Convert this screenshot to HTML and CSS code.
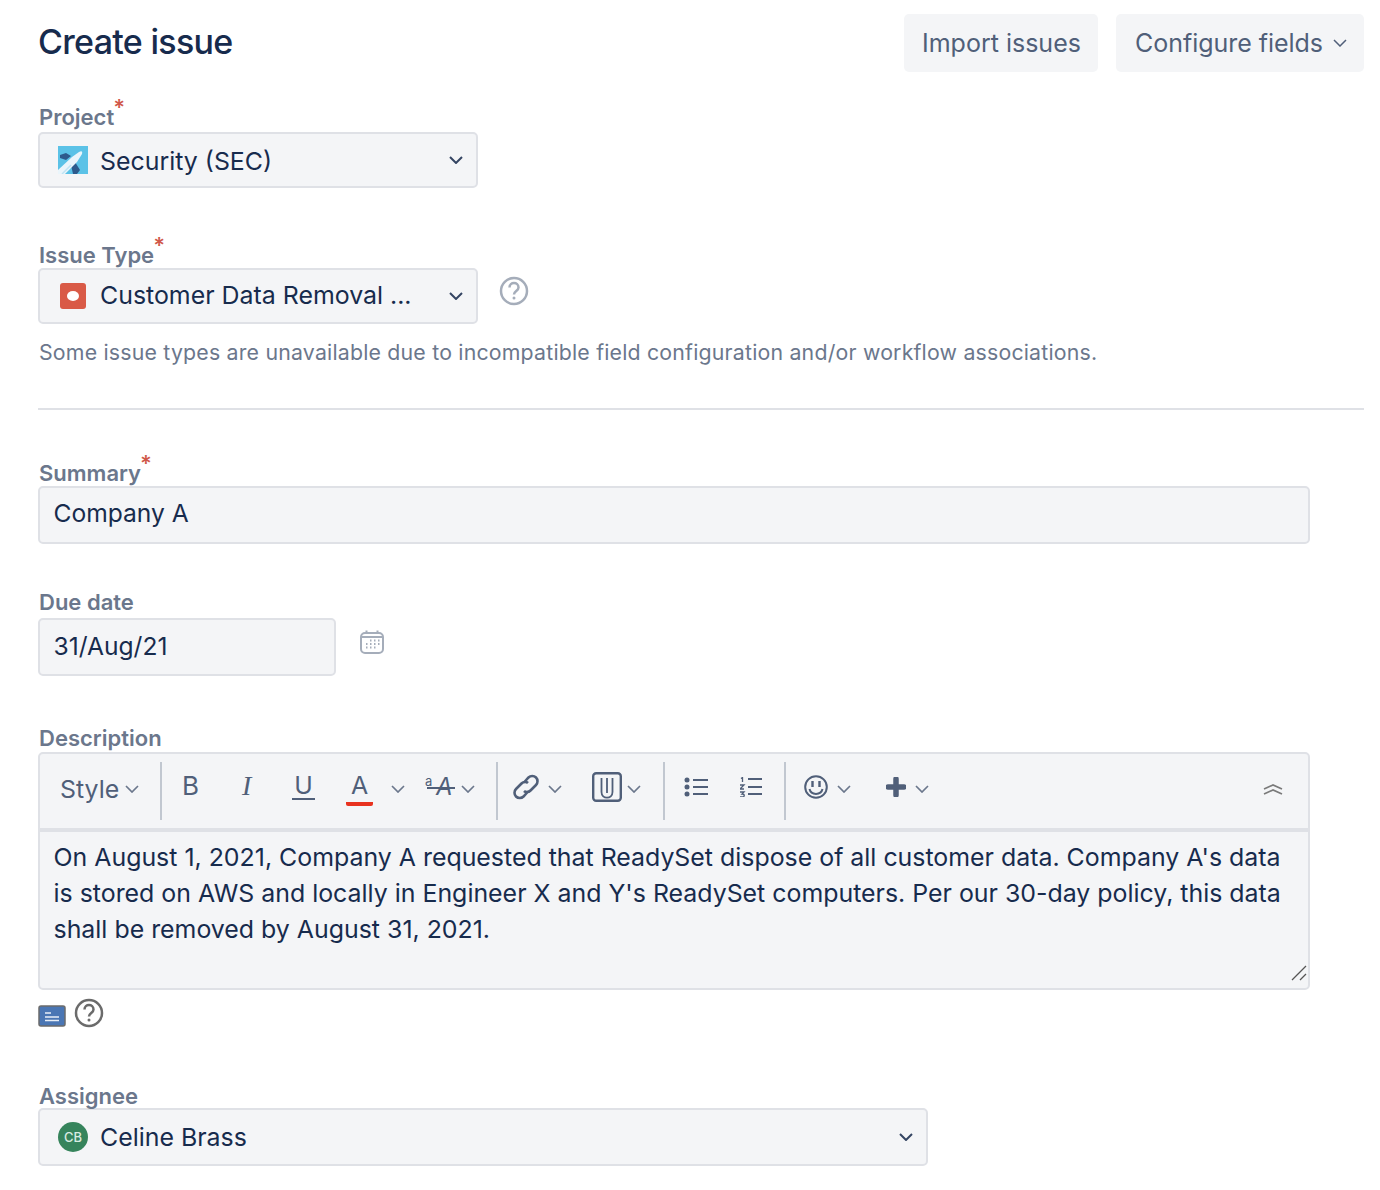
FILE: index.html

```html
<!DOCTYPE html>
<html>
<head>
  <meta charset="utf-8">
  <title>Create issue</title>
  <link rel="stylesheet" href="styles.css">
</head>
<body>

<div class="header">
  <h1>Create issue</h1>
  <div class="header-actions">
    <button class="btn btn-import">Import issues</button>
    <button class="btn btn-configure">Configure fields
      <svg class="chev" viewBox="0 0 14 8"><path d="M1 1l6 6 6-6"/></svg>
    </button>
  </div>
</div>

<div class="field field-project">
  <label>Project<span class="req">*</span></label>
  <div class="select select-short">
    <svg class="project-icon" viewBox="0 0 30 28">
      <rect width="30" height="28" fill="#5bc2e7"/>
      <path d="M2 9l6-2 5 3-5 4-6-2zM13 19l4-3 5 8-3 4h-4z" fill="#2d5a8c"/>
      <path d="M0 24L14 11 21 6q4-2 3 2L19 16 7 28H0z" fill="#eaf5fb"/>
      <path d="M4 28L13 19" stroke="#bfe3f3" stroke-width="1.500"/>
    </svg>
    <span class="select-value value-project">Security (SEC)</span>
    <svg class="select-chev" viewBox="0 0 14 8"><path d="M1 1l6 6 6-6"/></svg>
  </div>
</div>

<div class="field field-type">
  <label>Issue Type<span class="req">*</span></label>
  <div class="type-row">
    <div class="select select-short">
      <span class="type-icon"><span class="type-dot"></span></span>
      <span class="select-value value-type">Customer Data Removal ...</span>
      <svg class="select-chev" viewBox="0 0 14 8"><path d="M1 1l6 6 6-6"/></svg>
    </div>
    <svg class="help help-type" viewBox="0 0 30 30">
      <circle cx="15" cy="15" r="13"/>
      <path d="M10.500 11.500c0-6 9-6 9 0 0 3.500-4.500 3.500-4.500 7"/>
      <circle class="dot" cx="15" cy="22" r="1.500"/>
    </svg>
  </div>
  <p class="hint">Some issue types are unavailable due to incompatible field configuration and/or workflow associations.</p>
</div>

<hr>

<div class="field field-summary">
  <label>Summary<span class="req">*</span></label>
  <div class="input input-wide">Company A</div>
</div>

<div class="field field-due">
  <label>Due date</label>
  <div class="due-row">
    <div class="input input-date">31/Aug/21</div>
    <svg class="calendar" viewBox="0 0 26 26">
      <rect x="2" y="4" width="22" height="20" rx="4"/>
      <path d="M2 8h22M7.500 1.500V5M18.500 1.500V5"/>
      <path class="dots" d="M11 11.500h1.500M15 11.500h1.500M19 11.500h1.500M7 15h1.500M11 15h1.500M15 15h1.500M19 15h1.500M7 18.500h1.500M11 18.500h1.500M15 18.500h1.500"/>
    </svg>
  </div>
</div>

<div class="field field-desc">
  <label>Description</label>
  <div class="editor">
    <div class="toolbar">
      <span class="t-style">Style</span>
      <svg class="t-chev t-chev-style" viewBox="0 0 14 8"><path d="M1 1l6 6 6-6"/></svg>
      <span class="t-sep t-sep-1"></span>
      <span class="t-glyph t-bold">B</span>
      <span class="t-glyph t-italic">I</span>
      <span class="t-glyph t-under">U</span>
      <span class="t-glyph t-color">A</span>
      <svg class="t-chev t-chev-color" viewBox="0 0 14 8"><path d="M1 1l6 6 6-6"/></svg>
      <span class="t-size"><sup>a</sup><em>A</em></span>
      <svg class="t-chev t-chev-size" viewBox="0 0 14 8"><path d="M1 1l6 6 6-6"/></svg>
      <span class="t-sep t-sep-2"></span>
      <svg class="t-icon t-link" viewBox="0 0 28 28">
        <path d="M12 9.500l4.500-5c2-2 5.500-2 7.500 0s2 5.500 0 7.500l-5.500 5.500c-2 2-5 2-6.500.5"/>
        <path d="M16 18.500l-4.500 5c-2 2-5.500 2-7.500 0s-2-5.500 0-7.500l5.500-5.500c2-2 5-2 6.500-.5"/>
      </svg>
      <svg class="t-chev t-chev-link" viewBox="0 0 14 8"><path d="M1 1l6 6 6-6"/></svg>
      <svg class="t-icon t-attach" viewBox="0 0 30 30">
        <rect x="1.200" y="1.200" width="27.600" height="27.600" rx="3"/>
        <path class="thin" d="M9.500 6v14c0 7.500 11 7.500 11 0V6M15 6v15"/>
      </svg>
      <svg class="t-chev t-chev-attach" viewBox="0 0 14 8"><path d="M1 1l6 6 6-6"/></svg>
      <span class="t-sep t-sep-3"></span>
      <svg class="t-icon t-bullets" viewBox="0 0 24 20">
        <circle class="fill" cx="3" cy="3" r="2.500"/><circle class="fill" cx="3" cy="10" r="2.500"/><circle class="fill" cx="3" cy="17" r="2.500"/>
        <path d="M9 3h15M9 10h15M9 17h15"/>
      </svg>
      <svg class="t-icon t-numbers" viewBox="0 0 22 20">
        <path d="M8 2h14M8 10h14M8 17h14"/>
        <path class="thin" d="M1 1.500l1.500-1v4.500M0 8h4l-4 4h4M0 15h4l-2 2c3 0 3 3 0 3H0"/>
      </svg>
      <span class="t-sep t-sep-4"></span>
      <svg class="t-icon t-smile" viewBox="0 0 24 24">
        <circle cx="12" cy="12" r="10.800"/>
        <path class="thick" d="M8.500 6v6M15.500 6v6"/>
        <path d="M5.500 14c1.500 6.500 11.500 6.500 13 0"/>
      </svg>
      <svg class="t-chev t-chev-smile" viewBox="0 0 14 8"><path d="M1 1l6 6 6-6"/></svg>
      <svg class="t-icon t-plus" viewBox="0 0 20 20">
        <path class="plus" d="M10 2v16M2 10h16"/>
      </svg>
      <svg class="t-chev t-chev-plus" viewBox="0 0 14 8"><path d="M1 1l6 6 6-6"/></svg>
      <svg class="t-collapse" viewBox="0 0 20 12"><path d="M1 6l9-4 9 4M1 11l9-4 9 4"/></svg>
    </div>
    <div class="editor-body">
      On August 1, 2021, Company A requested that ReadySet dispose of all customer data. Company A's data is stored on AWS and locally in Engineer X and Y's ReadySet computers. Per our 30-day policy, this data shall be removed by August 31, 2021.
      <svg class="resize" viewBox="0 0 16 16"><path d="M1 15L15 1M9 15l6-6"/></svg>
    </div>
  </div>
  <div class="editor-foot">
    <svg class="foot-doc" viewBox="0 0 28 22">
      <rect x="1" y="1" width="26" height="20" rx="2"/>
      <path d="M7 8h6M7 12h14M7 15.500h14"/>
    </svg>
    <svg class="help help-foot" viewBox="0 0 30 30">
      <circle cx="15" cy="15" r="13"/>
      <path d="M10.500 11.500c0-6 9-6 9 0 0 3.500-4.500 3.500-4.500 7"/>
      <circle class="dot" cx="15" cy="22" r="1.500"/>
    </svg>
  </div>
</div>

<div class="field field-assignee">
  <label>Assignee</label>
  <div class="select select-assignee">
    <span class="avatar">CB</span>
    <span class="select-value">Celine Brass</span>
    <svg class="select-chev" viewBox="0 0 14 8"><path d="M1 1l6 6 6-6"/></svg>
  </div>
</div>

</body>
</html>
```

FILE: styles.css

```css
* {
    box-sizing: border-box;
}

body {
    margin: 0;
    padding: 14px 16px 0 38px;
    background: #fff;
    color: #172b4d;
    font-family: Inter, "Liberation Sans", sans-serif;
    font-size: 24.9px;
}

svg {
    display: block;
    flex: none;
    fill: none;
}

/* header */
.header {
    display: flex;
    justify-content: space-between;
    height: 58px;
}

h1 {
    margin: 6px 0 0;
    font-size: 34px;
    line-height: 44px;
    font-weight: 500;
    letter-spacing: -0.7px;
}

.header-actions {
    display: flex;
    gap: 18px;
}

.btn {
    display: flex;
    align-items: center;
    height: 58px;
    border: 0;
    border-radius: 5px;
    background: #f4f5f7;
    color: #505f79;
    font-family: inherit;
    font-size: 25px;
    padding: 0;
}

.btn-import {
    width: 194px;
    padding-left: 18px;
}

.btn-configure {
    width: 248px;
    padding-left: 19px;
    letter-spacing: -0.03px;
}

.chev {
    width: 14px;
    height: 8px;
    margin-left: 10px;
    stroke: #505f79;
    stroke-width: 1.500;
}

/* fields */
label {
    display: block;
    padding-left: 1px;
    color: #6b778c;
    font-size: 22px;
    font-weight: 600;
    line-height: 22px;
}

.req {
    position: relative;
    top: -10px;
    margin-left: -1px;
    color: #d0584a;
    font-size: 22px;
    line-height: 0;
}

.field-project {
    margin-top: 33px;
}

.field-project label {
    margin-bottom: 4px;
    padding-top: 1px;
}

.field-type {
    margin-top: 56px;
}

.field-type label {
    margin-bottom: 2px;
}

.select, .input {
    display: flex;
    align-items: center;
    border: 2px solid #dfe1e6;
    border-radius: 5px;
    background: #f4f5f7;
}

.select-short {
    width: 440px;
    height: 56px;
}

.select-assignee {
    width: 890px;
    height: 58px;
}

.select-value {
    margin-left: 12px;
    white-space: nowrap;
}

.value-project {
    margin-top: 2px;
}

.value-type {
    margin-top: -2px;
}

.select-chev {
    width: 14px;
    height: 8px;
    margin-left: auto;
    margin-right: 13px;
    stroke: #344563;
    stroke-width: 2;
}

.project-icon {
    width: 30px;
    height: 28px;
    margin-left: 18px;
}

.type-icon {
    display: flex;
    align-items: center;
    justify-content: center;
    width: 26px;
    height: 26px;
    margin-left: 20px;
    border-radius: 3px;
    background: #d95a47;
}

.type-icon + .select-value {
    margin-left: 14px;
}

.type-dot {
    width: 12px;
    height: 10px;
    border-radius: 50%;
    background: #fff;
}

.type-row {
    display: flex;
}

.help {
    fill: none;
    stroke-width: 2.500;
}

.help .dot {
    stroke: none;
}

.help-type {
    width: 30px;
    height: 30px;
    margin: 8px 0 0 21px;
    stroke: #a5adba;
}

.help-type .dot {
    fill: #a5adba;
}

.help-foot {
    width: 30px;
    height: 30px;
    margin-left: 8px;
    stroke: #6b6b6b;
}

.help-foot .dot {
    fill: #6b6b6b;
}

.hint {
    margin: 15px 0 0 1px;
    color: #6b778c;
    font-size: 21.3px;
    line-height: 26px;
    letter-spacing: 0.2px;
}

hr {
    height: 2px;
    margin: 43px 0 0;
    border: 0;
    background: #dfe1e6;
}

.field-summary {
    margin-top: 52px;
}

.field-summary label {
    margin-bottom: 2px;
}

.input {
    height: 58px;
    padding-left: 13.500px;
    font-size: 24.6px;
}

.input-wide {
    width: 1272px;
    padding-bottom: 4px;
}

.input-date {
    width: 298px;
    padding-bottom: 2px;
}

.field-due {
    margin-top: 47px;
}

.field-due label {
    margin-bottom: 5px;
}

.due-row {
    display: flex;
}

.calendar {
    width: 26px;
    height: 26px;
    margin: 11px 0 0 23px;
    stroke: #a5adba;
    stroke-width: 2;
}

.field-desc {
    margin-top: 51px;
}

.field-desc label {
    margin-bottom: 3px;
}

/* editor */
.editor {
    width: 1272px;
    height: 238px;
    border: 2px solid #dfe1e6;
    border-radius: 5px;
    background: #f4f5f7;
}

.toolbar {
    position: relative;
    display: flex;
    align-items: center;
    height: 78px;
    padding-left: 20px;
    border-bottom: 4px solid #dfe1e6;
    color: #505f79;
}

.t-style {
    width: 59px;
    line-height: 30px;
    margin-top: -4px;
}

.t-chev {
    width: 14px;
    height: 8px;
    margin-top: -4px;
    stroke: #6b778c;
    stroke-width: 1.700;
}

.t-chev-style {
    margin-left: 6px;
}

.t-sep {
    width: 2px;
    height: 58px;
    background: #c1c7d0;
}

.t-sep-1 { margin-left: 21px; }
.t-sep-2 { margin-left: 21px; }
.t-sep-3 { margin-left: 22px; }
.t-sep-4 { margin-left: 22px; }

.t-glyph {
    line-height: 30px;
    margin-top: -10px;
}

.t-bold {
    width: 20px;
    margin-left: 20px;
    font-size: 26px;
}

.t-italic {
    width: 18px;
    margin-left: 37px;
    padding-left: 3px;
    font-family: "Liberation Serif", serif;
    font-style: italic;
    font-size: 28px;
}

.t-under {
    width: 23px;
    margin-left: 35px;
    border-bottom: 2px solid #505f79;
    line-height: 26px;
    text-align: center;
}

.t-color {
    width: 27px;
    margin-left: 31px;
    margin-top: -6px;
    padding-bottom: 3px;
    border-bottom: 4px solid #e8321f;
    border-radius: 2px;
    line-height: 28px;
    text-align: center;
}

.t-chev-color {
    margin-left: 18px;
}

.t-size {
    position: relative;
    width: 30px;
    height: 30px;
    margin-left: 20px;
    line-height: 30px;
    margin-top: -4px;
}

.t-size sup {
    position: absolute;
    left: 0;
    top: -1px;
    font-size: 13px;
    line-height: 16px;
}

.t-size em {
    position: absolute;
    left: 11px;
    top: -2px;
    font-size: 24px;
}

.t-size::after {
    content: "";
    position: absolute;
    left: 2px;
    right: 0;
    top: 13px;
    height: 2px;
    background: #505f79;
}

.t-chev-size {
    margin-left: 6px;
}

.t-icon {
    stroke: #505f79;
    stroke-width: 2;
    margin-top: -8px;
}

.t-link {
    width: 28px;
    height: 28px;
    margin-left: 14px;
    stroke-width: 2.600;
}

.t-chev-link {
    margin-left: 8px;
}

.t-attach {
    width: 30px;
    height: 30px;
    margin-left: 30px;
    stroke-width: 2.400;
}

.t-attach .thin {
    stroke-width: 1.800;
}

.t-chev-attach {
    margin-left: 5px;
}

.t-bullets {
    width: 24px;
    height: 20px;
    margin-left: 19px;
}

.t-bullets .fill {
    fill: #505f79;
    stroke: none;
}

.t-numbers {
    width: 22px;
    height: 20px;
    margin-left: 32px;
}

.t-numbers .thin {
    stroke-width: 1.300;
}

.t-smile {
    width: 24px;
    height: 24px;
    margin-left: 18px;
}

.t-smile .thick {
    stroke-width: 2.400;
}

.t-chev-smile {
    margin-left: 9px;
}

.t-plus {
    width: 20px;
    height: 20px;
    margin-left: 35px;
}

.t-plus .plus {
    stroke-width: 5.500;
    stroke-linecap: round;
}

.t-chev-plus {
    margin-left: 9px;
}

.t-collapse {
    position: absolute;
    right: 25px;
    top: 29px;
    width: 20px;
    height: 12px;
    stroke: #7a7a7a;
    stroke-width: 1.700;
}

.editor-body {
    position: relative;
    padding: 7px 13px 0 13.500px;
    line-height: 36px;
}

.resize {
    position: absolute;
    right: 1px;
    bottom: -34px;
    width: 16px;
    height: 16px;
    stroke: #555;
    stroke-width: 1.300;
}

.editor-foot {
    display: flex;
    margin-top: 8px;
}

.foot-doc {
    width: 28px;
    height: 22px;
    margin-top: 7px;
}

.foot-doc rect {
    fill: #4a76b4;
    stroke: #6b6b6b;
    stroke-width: 1.500;
}

.foot-doc path {
    stroke: #e8eef7;
    stroke-width: 1.500;
}

/* assignee */
.field-assignee {
    margin-top: 57px;
}

.field-assignee label {
    margin-bottom: 1px;
}

.avatar {
    display: flex;
    align-items: center;
    justify-content: center;
    width: 30px;
    height: 30px;
    margin-left: 18px;
    border-radius: 50%;
    background: #36845c;
    color: #d9ece2;
    font-size: 13px;
    font-weight: 500;
}
```
